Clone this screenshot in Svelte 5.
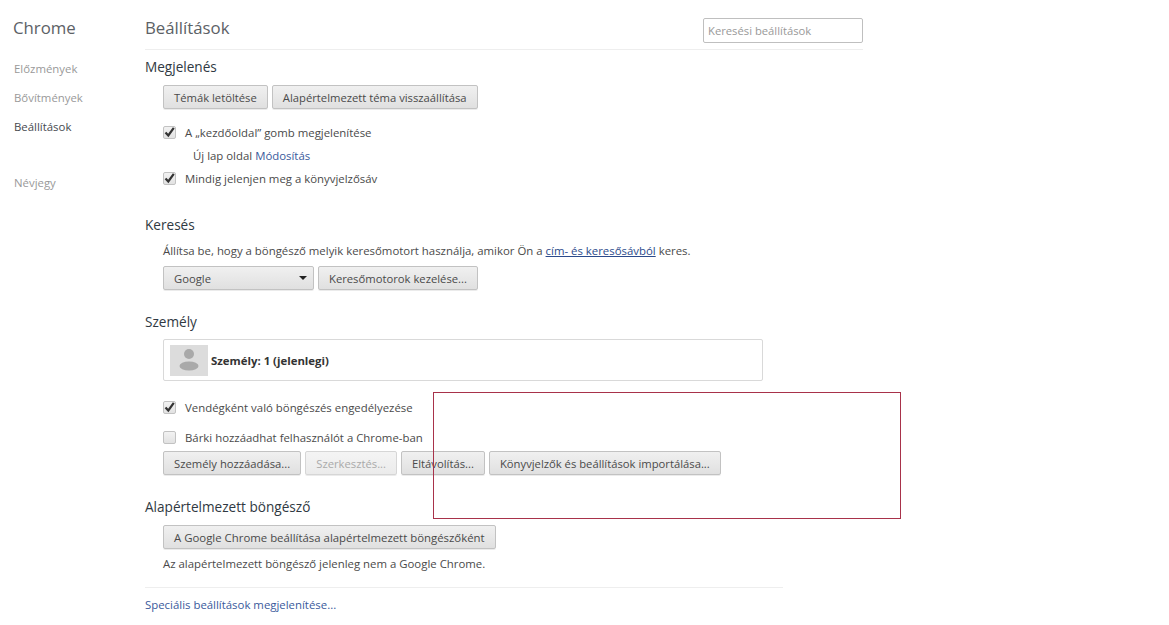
<script lang="ts">
  const nav = [
    { label: "Előzmények" },
    { label: "Bővítmények" },
    { label: "Beállítások", active: true },
  ];
</script>

{#snippet box(checked: boolean)}
  <span class="box">
    {#if checked}
      <svg width="13" height="13" viewBox="0 0 13 13">
        <path d="M2.500 6.500 5.300 9.500 10.800 1.800" fill="none" stroke="#333" stroke-width="2.200" />
      </svg>
    {/if}
  </span>
{/snippet}

<div class="page">
  <aside class="side">
    <h1>Chrome</h1>
    <ul>
      {#each nav as item (item.label)}
        <li class:active={item.active}>{item.label}</li>
      {/each}
      <li class="about">Névjegy</li>
    </ul>
  </aside>

  <main class="main">
    <header class="head">
      <h2>Beállítások</h2>
      <input class="search" type="text" placeholder="Keresési beállítások" />
    </header>

    <section class="appearance">
      <h3>Megjelenés</h3>
      <div class="body">
        <div class="btns">
          <button>Témák letöltése</button>
          <button>Alapértelmezett téma visszaállítása</button>
        </div>
        <div class="check first">{@render box(true)}<span>A „kezdőoldal” gomb megjelenítése</span></div>
        <div class="home">Új lap oldal <a href="#m">Módosítás</a></div>
        <div class="check">{@render box(true)}<span>Mindig jelenjen meg a könyvjelzősáv</span></div>
      </div>
    </section>

    <section class="search-sec">
      <h3>Keresés</h3>
      <div class="body">
        <p class="desc">Állítsa be, hogy a böngésző melyik keresőmotort használja, amikor Ön a <a class="ul" href="#c">cím- és keresősávból</a> keres.</p>
        <div class="btns">
          <div class="select">Google<svg width="8" height="4" viewBox="0 0 8 4"><path d="M0 0h8L4 4z" fill="#222" /></svg></div>
          <button>Keresőmotorok kezelése...</button>
        </div>
      </div>
    </section>

    <section class="people">
      <h3>Személy</h3>
      <div class="body">
        <div class="profile">
          <div class="avatar">
            <svg width="38" height="31" viewBox="0 0 38 31">
              <circle cx="19" cy="9" r="5" fill="#a9a9a9" />
              <ellipse cx="19" cy="21" rx="9.500" ry="4.500" fill="#a9a9a9" />
            </svg>
          </div>
          <b>Személy: 1 (jelenlegi)</b>
        </div>
        <div class="check guest">{@render box(true)}<span>Vendégként való böngészés engedélyezése</span></div>
        <div class="check anyone">{@render box(false)}<span>Bárki hozzáadhat felhasználót a Chrome-ban</span></div>
        <div class="btns">
          <button>Személy hozzáadása...</button>
          <button disabled>Szerkesztés...</button>
          <button>Eltávolítás...</button>
          <button>Könyvjelzők és beállítások importálása...</button>
        </div>
      </div>
    </section>

    <section class="default">
      <h3>Alapértelmezett böngésző</h3>
      <div class="body">
        <div class="btns"><button>A Google Chrome beállítása alapértelmezett böngészőként</button></div>
        <p class="state">Az alapértelmezett böngésző jelenleg nem a Google Chrome.</p>
      </div>
    </section>

    <footer class="foot"><a href="#s">Speciális beállítások megjelenítése...</a></footer>
  </main>

  <!-- annotation drawn over the screenshot -->
  <div class="mark"></div>
</div>

<style>
  :global(body) {
    background: #fff;
  }
  .page {
    position: relative;
    display: flex;
    width: 1169px;
    height: 625px;
    overflow: hidden;
    font-family: "Open Sans", "Noto Sans", sans-serif;
    font-size: 11.4px;
    color: #4a4a4a;
  }
  .side {
    width: 145px;
    flex: none;
    padding-left: 14px;
    box-sizing: border-box;
  }
  .side h1 {
    margin: 17px 0 0 -1px;
    font-size: 16.800px;
    line-height: 22px;
    font-weight: 400;
    color: #5c6166;
  }
  .side ul {
    list-style: none;
    margin: 20px 0 0;
    padding: 0;
  }
  .side li {
    height: 29px;
    line-height: 19px;
    color: #999;
  }
  .side li.active {
    color: #464a4f;
  }
  .side li.about {
    margin-top: 27px;
  }
  .main {
    width: 718px;
    flex: none;
  }
  .head {
    display: flex;
    justify-content: space-between;
    align-items: flex-start;
    height: 49px;
    border-bottom: 1px solid #eee;
  }
  .head h2 {
    margin: 17px 0 0;
    font-size: 16.800px;
    line-height: 22px;
    font-weight: 400;
    color: #5c6166;
  }
  .search {
    width: 160px;
    height: 25px;
    margin-top: 18px;
    box-sizing: border-box;
    border: 1px solid #bfbfbf;
    border-radius: 2px;
    padding: 0 4px;
    font: inherit;
    font-size: 11.250px;
    outline: none;
  }
  .search::placeholder {
    color: #999;
    opacity: 1;
  }
  section h3 {
    margin: 0;
    font-size: 13.600px;
    line-height: 18px;
    font-weight: 400;
    color: #303942;
  }
  .body {
    padding-left: 18px;
  }
  .appearance {
    padding-top: 8px;
  }
  .appearance .body {
    padding-top: 9px;
  }
  .search-sec {
    padding-top: 29px;
  }
  .people {
    padding-top: 23px;
  }
  .default {
    padding-top: 23px;
  }
  .btns {
    display: flex;
    gap: 4px;
    height: 24px;
  }
  button,
  .select {
    height: 24px;
    box-sizing: border-box;
    padding: 0 10px;
    border: 1px solid #c2c2c2;
    border-radius: 2px;
    background: linear-gradient(#f0f0f0, #e0e0e0);
    box-shadow: 0 1px 0 rgba(0, 0, 0, 0.08);
    font: inherit;
    font-size: 11.250px;
    color: #4a4a4a;
    white-space: nowrap;
  }
  button:disabled {
    color: #aaa;
    background: linear-gradient(#f4f4f4, #ebebeb);
    border-color: #d6d6d6;
  }
  .default button {
    font-size: 11.400px;
  }
  .select {
    display: flex;
    align-items: center;
    justify-content: space-between;
    width: 151px;
    padding-right: 6px;
  }
  .check {
    display: flex;
    align-items: center;
    height: 18px;
    gap: 9px;
  }
  .box {
    display: block;
    flex: none;
    width: 13px;
    height: 13px;
    box-sizing: border-box;
    border: 1px solid #c2c2c2;
    border-radius: 2px;
    background: linear-gradient(#f2f2f2, #e2e2e2);
  }
  .box svg {
    display: block;
    margin: -1px;
  }
  .check.first {
    margin-top: 14px;
  }
  .home {
    height: 18px;
    line-height: 18px;
    margin-top: 6px;
    padding-left: 30px;
  }
  .home + .check {
    margin-top: 4px;
  }
  a {
    color: #3a5a9c;
    text-decoration: none;
  }
  a.ul {
    text-decoration: underline;
    color: #2b4a8b;
  }
  p {
    margin: 0;
  }
  .desc {
    height: 18px;
    line-height: 18px;
    margin-top: 8px;
    margin-bottom: 6px;
  }
  .profile {
    display: flex;
    align-items: center;
    gap: 3px;
    width: 600px;
    height: 42px;
    box-sizing: border-box;
    margin-top: 8px;
    padding-left: 6px;
    border: 1px solid #d9d9d9;
    border-radius: 2px;
  }
  .avatar {
    display: flex;
    width: 38px;
    height: 31px;
    background: #dcdcdc;
  }
  .profile b {
    font-weight: 700;
    color: #333;
  }
  .check.guest {
    margin-top: 17px;
  }
  .check.anyone {
    margin-top: 12px;
  }
  .anyone + .btns {
    margin-top: 5px;
  }
  .default .btns {
    margin-top: 9px;
  }
  .state {
    height: 18px;
    line-height: 18px;
    margin-top: 6px;
  }
  .foot {
    width: 638px;
    margin-top: 14px;
    padding-top: 8px;
    border-top: 1px solid #eee;
    line-height: 18px;
  }
  .mark {
    position: absolute;
    left: 433px;
    top: 392px;
    width: 468px;
    height: 127px;
    box-sizing: border-box;
    border: 1px solid #a8324a;
  }
</style>
